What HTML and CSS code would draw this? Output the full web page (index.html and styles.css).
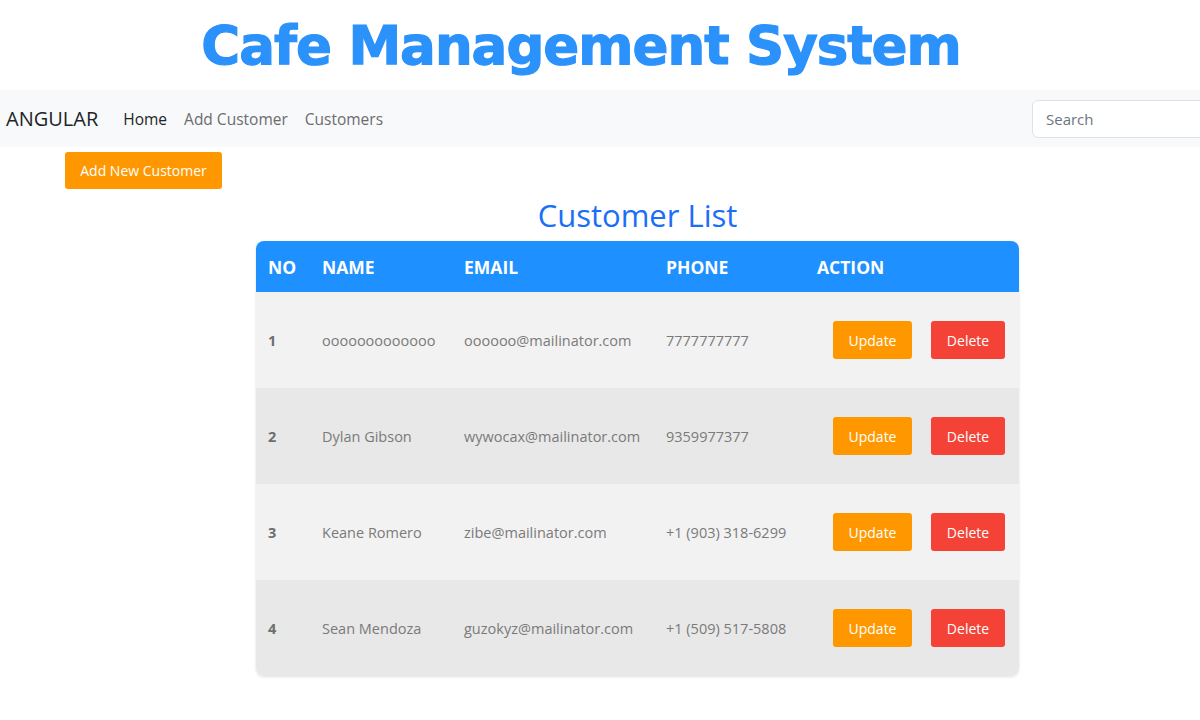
FILE: index.html
```html
<!DOCTYPE html>
<html lang="en">
<head>
<meta charset="utf-8">
<title>Cafe Management System</title>
<link rel="stylesheet" href="styles.css">
</head>
<body>
<header class="site-title">
  <h1>Cafe Management System</h1>
</header>
<nav class="navbar">
  <a class="brand" href="#">ANGULAR</a>
  <ul class="nav-links">
    <li><a class="active" href="#">Home</a></li>
    <li><a href="#">Add Customer</a></li>
    <li><a href="#">Customers</a></li>
  </ul>
  <input class="search" type="text" placeholder="Search">
</nav>
<div class="toolbar">
  <button class="btn btn-orange btn-add">Add New Customer</button>
</div>
<main class="content">
  <h2 class="list-title">Customer List</h2>
  <table class="customers">
    <colgroup>
      <col class="c-no"><col class="c-name"><col class="c-email"><col class="c-phone"><col class="c-action">
    </colgroup>
    <thead>
      <tr><th>NO</th><th>NAME</th><th>EMAIL</th><th>PHONE</th><th>ACTION</th></tr>
    </thead>
    <tbody>
      <tr>
        <td class="num">1</td><td>ooooooooooooo</td><td>oooooo@mailinator.com</td><td>7777777777</td>
        <td class="actions"><button class="btn btn-orange">Update</button><button class="btn btn-red">Delete</button></td>
      </tr>
      <tr>
        <td class="num">2</td><td>Dylan Gibson</td><td>wywocax@mailinator.com</td><td>9359977377</td>
        <td class="actions"><button class="btn btn-orange">Update</button><button class="btn btn-red">Delete</button></td>
      </tr>
      <tr>
        <td class="num">3</td><td>Keane Romero</td><td>zibe@mailinator.com</td><td>+1 (903) 318-6299</td>
        <td class="actions"><button class="btn btn-orange">Update</button><button class="btn btn-red">Delete</button></td>
      </tr>
      <tr>
        <td class="num">4</td><td>Sean Mendoza</td><td>guzokyz@mailinator.com</td><td>+1 (509) 517-5808</td>
        <td class="actions"><button class="btn btn-orange">Update</button><button class="btn btn-red">Delete</button></td>
      </tr>
    </tbody>
  </table>
</main>
</body>
</html>
```
FILE: styles.css
```css
* { box-sizing: border-box; }
html, body { margin: 0; padding: 0; }
body {
  width: 1200px;
  height: 720px;
  overflow: hidden;
  background: #ffffff;
  font-family: "Open Sans", "Noto Sans", sans-serif;
  color: #212529;
}

.site-title {
  height: 90px;
  display: flex;
  align-items: center;
  justify-content: center;
  padding-right: 38px;
}
.site-title h1 {
  margin: 0;
  font-family: "DejaVu Sans", sans-serif;
  font-weight: 900;
  font-size: 53px;
  letter-spacing: -1px;
  color: #2b91fb;
  line-height: 1;
  -webkit-text-stroke: 1.2px #2b91fb;
}

.navbar {
  height: 57px;
  background: #f8f9fa;
  display: flex;
  align-items: center;
  padding-left: 6px;
}
.brand {
  font-size: 20px;
  color: #212529;
  text-decoration: none;
  margin-right: 25px;
}
.nav-links {
  list-style: none;
  margin: 0;
  padding: 0;
  display: flex;
  gap: 17px;
  flex: 1;
}
.nav-links a {
  font-size: 15.5px;
  color: #6c6c6c;
  text-decoration: none;
}
.nav-links a.active { color: #212529; }
.search {
  width: 200px;
  height: 38px;
  margin-right: -32px;
  border: 1px solid #dee2e6;
  border-radius: 6px;
  background: #fff;
  padding: 0 13px;
  font-family: inherit;
  font-size: 15px;
  color: #6c757d;
}
.search::placeholder { color: #6c757d; }

.toolbar {
  padding: 5px 0 0 65px;
}
.btn {
  border: none;
  border-radius: 3px;
  color: #fff;
  font-family: inherit;
  font-size: 14px;
  cursor: pointer;
}
.btn-orange { background: #ff9800; }
.btn-red { background: #f44336; }
.btn-add {
  width: 157px;
  height: 37px;
}

.content {
  width: 763px;
  margin-left: 256px;
}
.list-title {
  margin: 9px 0 8px;
  text-align: center;
  font-weight: 400;
  font-size: 31px;
  line-height: 35px;
  color: #1a6ef7;
}

.customers {
  width: 763px;
  border-collapse: separate;
  border-spacing: 0;
  table-layout: fixed;
  border-radius: 8px;
  overflow: hidden;
  box-shadow: 0 1px 3px rgba(0,0,0,0.12);
}
.c-no { width: 54px; }
.c-name { width: 142px; }
.c-email { width: 202px; }
.c-phone { width: 151px; }
.c-action { width: 214px; }

.customers th {
  height: 51px;
  background: #1e90ff;
  color: #fff;
  text-align: left;
  font-weight: 700;
  font-size: 17.5px;
  padding: 0 0 0 12px;
}
.customers td {
  height: 96px;
  padding: 0 0 0 12px;
  font-size: 14.5px;
  color: #7a7a7a;
  white-space: nowrap;
}
.customers tbody tr:nth-child(odd) td { background: #f2f2f2; }
.customers tbody tr:nth-child(even) td { background: #e8e8e8; }
.customers td.num { font-weight: 700; color: #6e6e6e; }
.customers td.actions { padding-left: 28px; }
.actions .btn {
  height: 38px;
  font-size: 14px;
}
.actions .btn-orange { width: 79px; margin-right: 19px; }
.actions .btn-red { width: 74px; }
```
